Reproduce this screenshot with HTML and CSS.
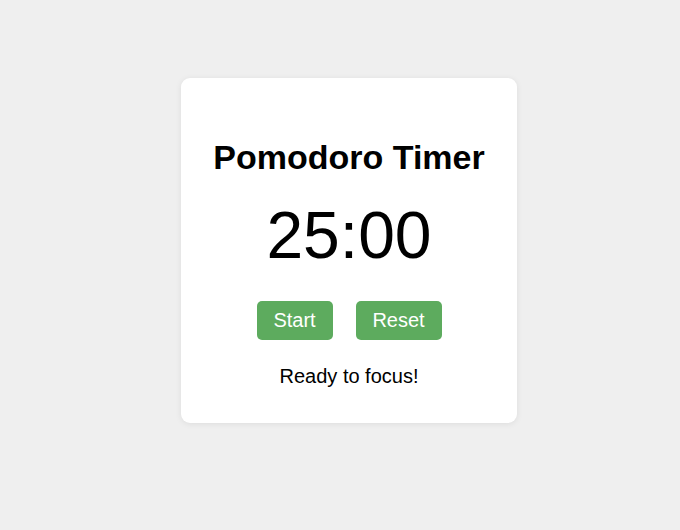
FILE: index.html
```html
<!DOCTYPE html>
<html lang="en">
<head>
<meta charset="utf-8">
<title>Pomodoro Timer</title>
<link rel="stylesheet" href="styles.css">
</head>
<body>
<div class="card">
  <h1 class="title">Pomodoro Timer</h1>
  <div class="time">25:00</div>
  <div class="controls">
    <button class="btn btn-start">Start</button>
    <button class="btn btn-reset">Reset</button>
  </div>
  <p class="status">Ready to focus!</p>
</div>
</body>
</html>
```

FILE: styles.css
```css
html, body {
  margin: 0;
  padding: 0;
}
body {
  background: #efefef;
  font-family: "Liberation Sans", Arial, sans-serif;
  color: #000;
  width: 680px;
  height: 530px;
  overflow: hidden;
}
.card {
  box-sizing: border-box;
  width: 336px;
  height: 345px;
  margin: 78px 0 0 181px;
  background: #fff;
  border-radius: 9px;
  box-shadow: 0 1px 6px rgba(0, 0, 0, 0.08);
  padding-top: 60px;
  display: flex;
  flex-direction: column;
  align-items: center;
}
.title {
  margin: 0;
  font-size: 34px;
  line-height: 38px;
  font-weight: bold;
}
.time {
  margin-top: 21px;
  font-size: 66px;
  line-height: 76px;
}
.controls {
  margin-top: 28px;
  display: flex;
  gap: 23px;
}
.btn {
  font-family: "Liberation Sans", Arial, sans-serif;
  font-size: 20px;
  line-height: 23px;
  color: #fff;
  background: #5dab5e;
  border: none;
  border-radius: 5px;
  height: 39px;
  padding: 0;
}
.btn-start {
  width: 76px;
}
.btn-reset {
  width: 86px;
}
.status {
  margin: 25px 0 0;
  font-size: 20px;
  line-height: 23px;
}
```
